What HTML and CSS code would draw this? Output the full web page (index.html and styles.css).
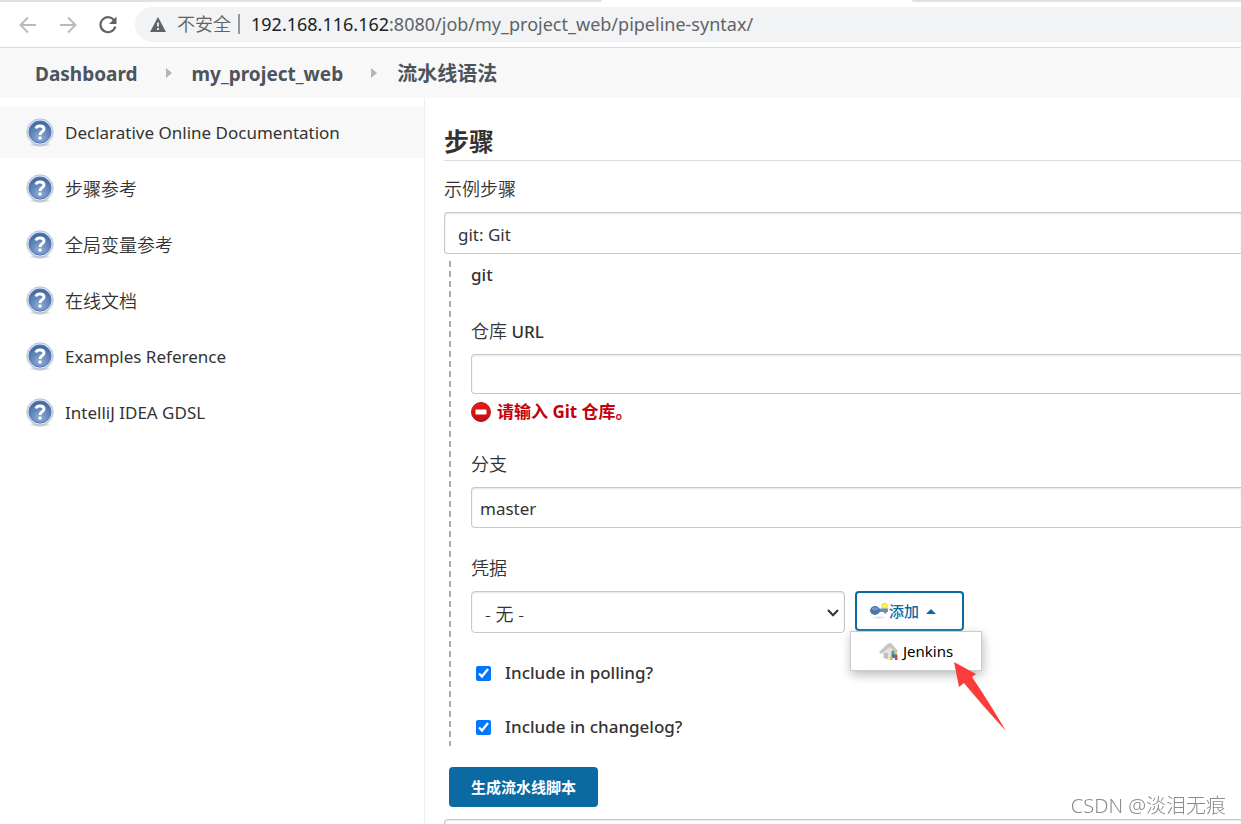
FILE: index.html
```html
<!DOCTYPE html>
<html lang="zh-CN">
<head>
<meta charset="utf-8">
<title>流水线语法</title>
<link rel="stylesheet" href="styles.css">
</head>
<body>
<svg class="defs" width="0" height="0" aria-hidden="true">
  <defs>
    <radialGradient id="blue" cx="50%" cy="75%" r="70%"><stop offset="0" stop-color="#8fb0da"/><stop offset="1" stop-color="#41689f"/></radialGradient>
    <radialGradient id="shade"><stop offset="0" stop-color="#777" stop-opacity=".7"/><stop offset="1" stop-color="#777" stop-opacity="0"/></radialGradient>
    <linearGradient id="red" x1="0" y1="0" x2="0" y2="1"><stop offset="0" stop-color="#f01818"/><stop offset="1" stop-color="#c00c10"/></linearGradient>
    <symbol id="help" viewBox="0 0 28 30">
      <ellipse cx="14" cy="26.500" rx="11" ry="2.500" fill="url(#shade)"/>
      <circle cx="14" cy="14" r="13.200" fill="#d5dfef" stroke="#a9bbd8" stroke-width=".8"/>
      <circle cx="14" cy="14" r="11" fill="url(#blue)" stroke="#5679ad" stroke-width="1"/>
      <path d="M10 10.600Q10.500 7.900 14 7.900Q18 7.900 18 10.900Q18 12.700 16 13.800Q14 14.900 14 17" fill="none" stroke="#fff" stroke-width="3"/>
      <rect x="12.500" y="18.400" width="3" height="3" rx=".6" fill="#fff"/>
    </symbol>
  </defs>
</svg>

<header class="browser">
  <div class="tabs"><span class="tab-left"></span><span class="tab-right"></span></div>
  <div class="toolbar">
    <button class="nav" aria-label="后退"><svg width="18" height="18" viewBox="0 0 18 18"><path d="M17 9H2M9 1.500L1.500 9L9 16.500" fill="none" stroke="#bababa" stroke-width="2"/></svg></button>
    <button class="nav" aria-label="前进"><svg width="18" height="18" viewBox="0 0 18 18"><path d="M1 9H16M9 1.500L16.500 9L9 16.500" fill="none" stroke="#bababa" stroke-width="2"/></svg></button>
    <button class="nav" aria-label="重新加载"><svg width="18" height="18" viewBox="0 0 18 18"><path d="M15.300 4.600A7.500 7.500 0 1 0 16.300 10.500" fill="none" stroke="#5f6368" stroke-width="2.200"/><path d="M17.500 .5V8H10Z" fill="#5f6368"/></svg></button>
    <div class="address">
      <svg width="16" height="15" viewBox="0 0 16 15"><path d="M8 0L16 15H0Z" fill="#5f6368"/><path d="M8 5.500V9.500M8 11V13" stroke="#f1f3f4" stroke-width="1.800"/></svg>
      <span class="unsafe">不安全</span>
      <span class="divider"></span>
      <span class="url"><b>192.168.116.162</b>:8080/job/my_project_web/pipeline-syntax/</span>
    </div>
  </div>
</header>

<nav class="crumbs">
  <a href="#">Dashboard</a>
  <svg width="6" height="10" viewBox="0 0 6 10"><path d="M0 0L6 5L0 10Z" fill="#b5b5b5"/></svg>
  <a href="#">my_project_web</a>
  <svg width="6" height="10" viewBox="0 0 6 10"><path d="M0 0L6 5L0 10Z" fill="#b5b5b5"/></svg>
  <a class="current" href="#">流水线语法</a>
</nav>

<div class="page">
  <aside class="side">
    <a class="task active" href="#"><svg width="28" height="30"><use href="#help"/></svg>Declarative Online Documentation</a>
    <a class="task" href="#"><svg width="28" height="30"><use href="#help"/></svg><span class="han">步骤参考</span></a>
    <a class="task" href="#"><svg width="28" height="30"><use href="#help"/></svg><span class="han">全局变量参考</span></a>
    <a class="task" href="#"><svg width="28" height="30"><use href="#help"/></svg><span class="han">在线文档</span></a>
    <a class="task" href="#"><svg width="28" height="30"><use href="#help"/></svg>Examples Reference</a>
    <a class="task" href="#"><svg width="28" height="30"><use href="#help"/></svg>IntelliJ IDEA GDSL</a>
  </aside>

  <main class="main">
    <h2>步骤</h2>
    <label class="label han" for="step">示例步骤</label>
    <select class="field tall" id="step"><option>git: Git</option></select>
    <section class="group">
      <div class="name">git</div>
      <label class="label" for="repo"><span class="han">仓库</span> URL</label>
      <input class="field" id="repo" type="text">
      <div class="error">
        <svg width="20" height="20" viewBox="0 0 20 20"><circle cx="10" cy="10" r="9.500" fill="url(#red)" stroke="#b51a1a"/><rect x="4.500" y="7.500" width="11" height="5" rx="1" fill="#fff" stroke="#e88" stroke-width=".6"/></svg>
        请输入 Git 仓库。
      </div>
      <label class="label han" for="branch">分支</label>
      <input class="field branch" id="branch" type="text" value="master">
      <label class="label han credential" for="cred">凭据</label>
      <div class="row">
        <div class="picker">
          <select class="field tall" id="cred"><option>- 无 -</option></select>
          <svg class="chevron" width="12" height="8" viewBox="0 0 12 8"><path d="M1 1L6 6.300L11 1" fill="none" stroke="#333" stroke-width="2"/></svg>
        </div>
        <div class="add-wrap">
          <button class="add">
            <svg width="19" height="18" viewBox="0 0 19 18"><ellipse cx="9" cy="15.500" rx="8" ry="1.800" fill="url(#shade)" opacity=".4"/><circle cx="14.500" cy="4" r="2.600" fill="#fff36a" stroke="#f5e426" stroke-width="1.400"/><path d="M8 6.500H18V10H16.500V11.500H14V10H8Z" fill="#668dc1"/><ellipse cx="5" cy="8.500" rx="5" ry="4.400" fill="#4c75ae"/><ellipse cx="5" cy="6.700" rx="3" ry="1.500" fill="#7297c8"/></svg>
            添加
            <svg class="caret" width="10" height="5" viewBox="0 0 10 5"><path d="M0 5L5 0L10 5Z" fill="#0b6aa2"/></svg>
          </button>
          <div class="menu">
            <button class="item">
              <svg width="21" height="20" viewBox="0 0 21 20"><path d="M4 9V17L11 19L17 17V9L10 3Z" fill="#e2e2e0"/><path d="M0 11L9 2.500L12 2L19 10L17 12L11 6L2 13Z" fill="#c6c6c3"/><path d="M5 12H9V18L5 17Z" fill="#c0c0bc"/><circle cx="14" cy="11" r="1.600" fill="#50a847"/><path d="M12.500 12.500H16V17H12.500Z" fill="#3d73bd"/><circle cx="17" cy="13" r="1.300" fill="#e8a33d"/><path d="M16 14H18.500V19H16Z" fill="#cc493a"/><path d="M11 15.500H13.500V19H11Z" fill="#e4bd42"/></svg>
              Jenkins
            </button>
          </div>
          <svg class="pointer" width="54" height="70" viewBox="0 0 54 70"><path d="M0 0L22 12L18 15Q33 37 52 69Q28 43 10 21L5 25Z" fill="#fc3b3b"/></svg>
        </div>
      </div>
      <label class="check"><input type="checkbox" checked>Include in polling?</label>
      <label class="check"><input type="checkbox" checked>Include in changelog?</label>
    </section>
    <button class="generate">生成流水线脚本</button>
    <textarea class="output" aria-label="流水线脚本"></textarea>
  </main>
</div>
<div class="watermark">CSDN @淡泪无痕</div>
</body>
</html>
```
FILE: styles.css
```css
* { box-sizing: border-box; }
body {
  margin: 0;
  height: 100vh;
  display: flex;
  flex-direction: column;
  overflow: hidden;
  background: #fff;
  color: #333;
  font: 500 17px/24px "Noto Sans", "Noto Sans CJK SC", sans-serif;
}
svg { display: block; flex: none; }
a { color: inherit; text-decoration: none; }
button, input, select, textarea { font: inherit; color: inherit; }
button { cursor: pointer; }
.defs { position: absolute; }
.han { font-size: 18px; font-weight: 350; }

.browser { flex: none; border-bottom: 1px solid #d9dadc; }
.tabs { display: flex; justify-content: space-between; height: 2px; }
.tab-left { width: 48.5%; background: #dee1e6; border-bottom-right-radius: 2px; }
.tab-right { width: 26.5%; background: #dee1e6; border-bottom-left-radius: 2px; }
.toolbar { display: flex; align-items: center; padding: 5px 0 5px 19px; }
.nav { display: flex; padding: 0; margin-right: 22px; border: 0; background: none; }
.nav:nth-child(3) { margin-right: 18px; }
.address {
  flex: 1;
  display: flex;
  align-items: center;
  height: 35px;
  padding: 0 0 1px 15px;
  border-radius: 18px 0 0 18px;
  background: #f1f3f4;
  color: #5f6368;
  font-weight: 400;
  white-space: nowrap;
}
.unsafe { margin-left: 11px; font-size: 18px; font-weight: 350; }
.divider { width: 2px; height: 20px; margin: 0 11px 0 7px; background: #96999c; }
.url { font-size: 18px; }
.url b { color: #202124; font-weight: 400; }

.crumbs {
  flex: none;
  display: flex;
  align-items: center;
  height: 50px;
  padding: 2px 0 0 35px;
  background: #f8f8f8;
  color: #4d545d;
  font-size: 19px;
  font-weight: 700;
}
.crumbs svg { margin: 0 20px 2px 28px; }
.current { font-size: 20px; }

.page { flex: 1; min-height: 0; display: flex; }
.side {
  flex: none;
  width: 425px;
  display: flex;
  flex-direction: column;
  gap: 5px;
  padding-top: 9px;
  border-right: 1px solid #eaeff2;
}
.task { display: flex; align-items: center; gap: 11px; height: 51px; padding: 1px 0 0 26px; font-weight: 400; }
.active { background: #f8f8f8; }

.main { flex: 1; min-width: 0; display: flex; flex-direction: column; padding: 27px 0 0 19px; }
h2 { margin: 0 0 16px; padding-bottom: 2px; border-bottom: 1px solid #dcdcdc; font-size: 25px; line-height: 33px; font-weight: 700; }
.label { display: block; height: 24px; margin-bottom: 11px; }
.field {
  display: block;
  flex: none;
  width: 100%;
  height: 40px;
  padding: 0 8px;
  border: 1px solid #c8c8c8;
  border-right-width: 0;
  border-radius: 4px 0 0 4px;
  background: #fff;
  box-shadow: inset 0 1px 2px #e4e4e4;
  font-weight: 400;
  appearance: none;
}
.tall { height: 42px; padding: 3px 13px 0; }
.branch { height: 41px; padding-top: 2px; }
.group {
  flex: none;
  margin: 7px 0 0 5px;
  padding: 2px 0 7px 22px;
  background: repeating-linear-gradient(#aaa 0 6px, #fff 6px 10px) 0 0 / 2px 100% no-repeat;
}
.name { margin-bottom: 32px; }
.error { display: flex; align-items: center; gap: 6px; margin: 6px 0 28px; color: #c4000a; font-weight: 700; }
.credential { margin-top: 28px; }
.row { display: flex; align-items: flex-start; gap: 10px; margin-bottom: 28px; }
.picker { position: relative; width: 374px; }
.picker .field { border-right-width: 1px; border-radius: 4px; font-size: 18px; font-weight: 350; }
.chevron { position: absolute; right: 6px; top: 18px; pointer-events: none; }
.add-wrap { position: relative; }
.add {
  display: flex;
  align-items: center;
  width: 109px;
  height: 40px;
  padding: 0 13px;
  border: 2px solid #0b6aa2;
  border-radius: 4px;
  background: #fff;
  color: #0b6aa2;
  font-size: 15px;
  font-weight: 500;
}
.caret { margin-left: 7px; }
.menu { position: absolute; top: 40px; left: -5px; width: 132px; border: 1px solid #ccc; background: #fff; box-shadow: 1px 4px 10px #bbb; }
.item { display: flex; align-items: center; gap: 3px; width: 100%; height: 38px; padding: 0 0 1px 28px; border: 0; background: none; color: #000; font-size: 15px; font-weight: 400; }
.pointer { position: absolute; top: 71px; left: 99px; pointer-events: none; }
.check { display: flex; align-items: center; gap: 14px; height: 24px; padding-left: 5px; }
.check + .check { margin-top: 30px; }
.check input { width: 15px; height: 15px; margin: 0; accent-color: #0075ff; }
.generate {
  flex: none;
  align-self: flex-start;
  height: 40px;
  margin: 21px 0 12px 5px;
  padding: 0 22px;
  border: 0;
  border-radius: 4px;
  background: #0b6aa2;
  color: #fff;
  font-size: 15px;
  font-weight: 700;
}
.output { flex: 1; min-height: 0; width: 100%; padding: 0; border: 1px solid #c8c8c8; border-width: 1px 0 0 1px; border-radius: 4px 0 0 0; box-shadow: inset 0 1px 2px #e4e4e4; resize: none; }
.watermark { position: fixed; right: 15px; bottom: 6px; color: #8b8b8b; font-size: 20px; font-weight: 300; }
```
